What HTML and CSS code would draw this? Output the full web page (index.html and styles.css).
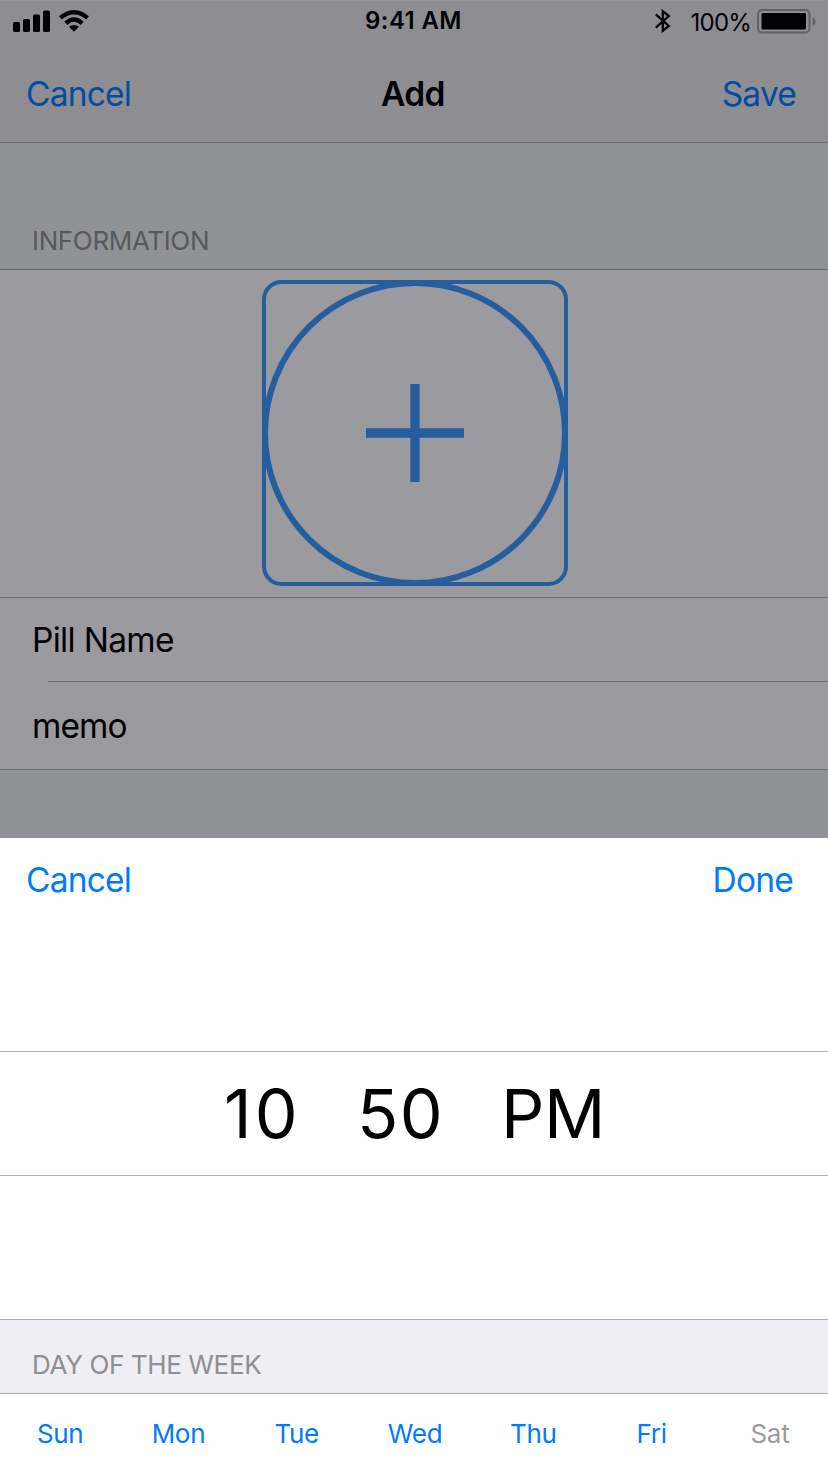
FILE: index.html
```html
<!DOCTYPE html>
<html lang="en">
<head>
<meta charset="utf-8">
<title>Add</title>
<link rel="stylesheet" href="styles.css">
</head>
<body>
<div class="screen">
  <div class="form">
    <header class="top">
      <div class="status">
        <div class="status-left">
          <svg class="signal" width="78" height="24" viewBox="0 0 78 24">
            <rect x="0" y="12" width="7" height="10" rx="1.5"/>
            <rect x="10" y="9" width="7" height="13" rx="1.5"/>
            <rect x="20" y="4.5" width="7" height="17.500" rx="1.5"/>
            <rect x="30" y="0.5" width="7" height="21.500" rx="1.500"/>
            <path d="M61 21.700 L56 16.800 Q61 13 66 16.800 Z"/>
            <path d="M52.800 13.300 Q61 5.800 69.200 13.300" fill="none" stroke="#020206" stroke-width="4.400"/>
            <path d="M47.400 7.900 Q61 -3.300 74.600 7.900" fill="none" stroke="#020206" stroke-width="4.400"/>
          </svg>
        </div>
        <div class="clock">9:41 AM</div>
        <div class="status-right">
          <svg class="bluetooth" width="18" height="26" viewBox="0 0 18 26">
            <path d="M1.800 6.300 L14.800 18 L8.800 22.800 V3.200 L14.800 8 L1.800 19.700" fill="none" stroke="#020206" stroke-width="2.300"/>
          </svg>
          <span class="percent">100%</span>
          <svg class="battery" width="60" height="26" viewBox="0 0 60 26">
            <rect x="1" y="1" width="51.500" height="22.500" rx="4.500" fill="none" stroke="#626166" stroke-width="2"/>
            <rect x="4.500" y="4" width="44.500" height="16.500" rx="1.500"/>
            <path d="M55.500 8.500 Q58.500 9.500 58.500 12.500 Q58.500 15.500 55.500 16.500 Z" fill="#626166"/>
          </svg>
        </div>
      </div>
      <nav class="nav">
        <span class="link cancel">Cancel</span>
        <span class="title">Add</span>
        <span class="link save">Save</span>
      </nav>
    </header>
    <h2 class="section-head"><span class="info">INFORMATION</span></h2>
    <div class="photo">
      <svg width="306" height="306" viewBox="0 0 306 306" fill="none" stroke="#255d9e">
        <rect x="2" y="2" width="302" height="302" rx="17.500" stroke-width="4"/>
        <circle cx="153" cy="153" r="150" stroke-width="6"/>
        <path d="M153 104 V202 M104 153 H202" stroke-width="9.300"/>
      </svg>
    </div>
    <div class="row pill"><span class="pill-text">Pill Name</span></div>
    <div class="row memo"><span class="memo-text">memo</span></div>
  </div>
  <section class="sheet">
    <div class="sheet-bar">
      <span class="cancel">Cancel</span>
      <span class="done">Done</span>
    </div>
    <div class="time">
      <span class="hour">10</span>
      <span class="minute">50</span>
      <span class="period">PM</span>
    </div>
    <h2 class="week-head"><span class="week">DAY OF THE WEEK</span></h2>
    <div class="days">
      <span class="day">Sun</span>
      <span class="day">Mon</span>
      <span class="day">Tue</span>
      <span class="day">Wed</span>
      <span class="day">Thu</span>
      <span class="day">Fri</span>
      <span class="day off">Sat</span>
    </div>
  </section>
</div>
</body>
</html>
```
FILE: styles.css
```css
* { box-sizing: border-box; }
body { margin: 0; font-family: Inter, Roboto, sans-serif; color: #000; }
h2 { margin: 0; font-weight: 400; }
svg { display: block; flex: none; }
span { white-space: nowrap; }
.screen { width: 828px; height: 1472px; overflow: hidden; display: flex; flex-direction: column; }

.form { height: 838px; background: #919297; color: #020206; }
.top { height: 143px; background: #8e8d92; border-top: 1px solid #96959a; border-bottom: 1px solid #68676c; }
.status { height: 43px; display: grid; grid-template-columns: 1fr auto 1fr; align-items: start; font-size: 24px; line-height: 28px; fill: #020206; }
.status-left { padding: 9px 0 0 13px; }
.clock { padding-top: 6px; font-weight: 600; letter-spacing: 0.4px; margin-left: -1px; }
.status-right { display: flex; justify-content: flex-end; padding-right: 11px; }
.bluetooth { margin-top: 7px; margin-right: 19px; }
.percent { padding-top: 8px; margin-right: 6px; letter-spacing: -0.8px; }
.battery { margin-top: 8px; }
.nav { height: 98px; padding: 2px 32px 0 26px; display: grid; grid-template-columns: 1fr auto 1fr; align-items: center; font-size: 33.5px; line-height: 44px; }
.link { color: #024da3; }
.cancel { letter-spacing: -0.8px; }
.title { font-weight: 600; letter-spacing: -0.6px; margin-right: -4px; }
.save { text-align: right; letter-spacing: -0.8px; }

.section-head { height: 127px; padding: 82px 32px 0; border-bottom: 1px solid #68676c; font-size: 26px; line-height: 32px; color: #58585c; }
.info { letter-spacing: -0.35px; }
.photo { height: 328px; padding: 10px 0 0 2px; display: flex; justify-content: center; background: #9b9a9f; border-bottom: 1px solid #6d6c71; }
.row { background: #9b9a9f; padding-left: 32px; font-size: 33.5px; line-height: 44px; }
.pill { height: 84px; padding-top: 20px; background: linear-gradient(#6d6c71, #6d6c71) 48px 83px / 100% 1px no-repeat #9b9a9f; }
.pill-text { letter-spacing: -0.7px; }
.memo-text { letter-spacing: -0.9px; }
.memo { height: 88px; padding-top: 22px; border-bottom: 1px solid #6d6c71; }

.sheet { flex: 1; background: #fff; }
.sheet-bar { height: 213px; padding: 20px 35px 0 26px; display: flex; justify-content: space-between; font-size: 33.5px; line-height: 44px; color: #007aff; }
.done { letter-spacing: -0.8px; }
.time { height: 125px; border-top: 1px solid #b2b2b2; border-bottom: 1px solid #b2b2b2; padding: 0 0 2px 224px; display: flex; align-items: center; font-size: 68px; line-height: 80px; }
.hour { width: 133px; letter-spacing: 3px; }
.minute { width: 144px; letter-spacing: 1.5px; }
.period { letter-spacing: -0.5px; }
.week-head { height: 75px; margin-top: 143px; padding: 29px 32px 0; background: #efeef4; border-top: 1px solid #aaaaae; border-bottom: 1px solid #aaaaae; font-size: 26px; line-height: 32px; color: #8e8e93; }
.week { letter-spacing: -0.37px; }
.days { display: grid; grid-template-columns: repeat(7, 118.300px); padding: 24px 0 0 1px; text-align: center; font-size: 26px; line-height: 32px; letter-spacing: -0.3px; color: #007aff; }
.off { color: #9b9b9b; }
```
